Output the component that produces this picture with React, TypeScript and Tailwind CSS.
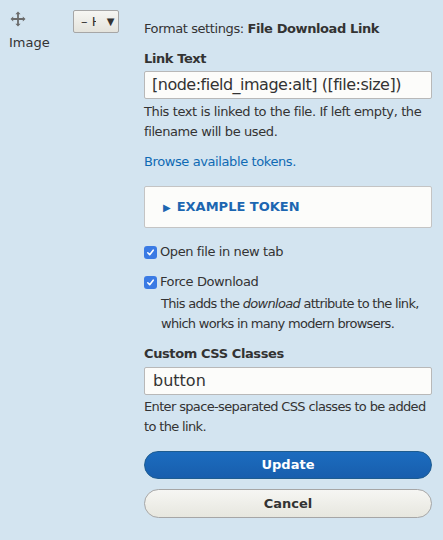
import React from 'react';

const MoveIcon = () => (
  <svg width="16" height="16" viewBox="0 0 16 16" className="text-[#6b6b6b]">
    <path
      fill="currentColor"
      d="M8 0.5 L10.6 3.2 H8.9 V7.1 H12.8 V5.4 L15.5 8 L12.8 10.6 V8.9 H8.9 V12.8 H10.6 L8 15.5 L5.4 12.8 H7.1 V8.9 H3.2 V10.6 L0.5 8 L3.2 5.4 V7.1 H7.1 V3.2 H5.4 Z"
    />
  </svg>
);

const Check = ({ label }: { label: string }) => (
  <label className="flex items-end leading-[20px]">
    <span className="mb-[3px] mr-[3px] flex h-[13px] w-[13px] shrink-0 items-center justify-center rounded-[3px] bg-[#3a7ae4]">
      <svg width="9" height="9" viewBox="0 0 9 9">
        <path d="M1.8 4.8 L3.7 6.7 L7.2 2.2" fill="none" stroke="white" strokeWidth="1.6" strokeLinecap="round" strokeLinejoin="round" />
      </svg>
    </span>
    <span>{label}</span>
  </label>
);

export default function App() {
  return (
    <div
      className="flex min-h-[540px] w-[443px] bg-[#d3e4f0] text-[13px] tracking-[-0.4px] text-[#333]"
      style={{ fontFamily: '"DejaVu Sans", "Liberation Sans", sans-serif' }}
    >
      {/* drag handle + label */}
      <div className="w-[73px] shrink-0 pl-[9px] pt-[11px]">
        <div className="pl-[1px]">
          <MoveIcon />
        </div>
        <div className="mt-[6px] leading-[20px] tracking-normal">Image</div>
      </div>

      {/* region select */}
      <div className="w-[71px] shrink-0 pt-[10px]">
        <div className="flex h-[23px] w-[46px] items-center rounded-[2px] border border-[#a6a6a6] bg-gradient-to-b from-[#f6f6f3] to-[#e4e3dc] pl-[7px] pr-[4px]">
          <span className="w-[15px] overflow-hidden whitespace-nowrap text-[13px] tracking-normal">– Hidden –</span>
          <span className="ml-auto text-[10px] text-[#333]">▼</span>
        </div>
      </div>

      {/* plugin settings */}
      <div className="w-[288px] shrink-0 pt-[19px]">
        <div className="leading-[20px]">
          Format settings: <span className="font-bold">File Download Link</span>
        </div>

        <div className="mt-[10px] font-bold leading-[20px]">Link Text</div>
        <div className="mt-[2px] flex h-[28px] items-center rounded-[2px] border border-[#b8b8b8] bg-[#fcfcfa] pl-[7px] text-[16px] tracking-[-0.5px]">
          [node:field_image:alt] ([file:size])
        </div>
        <p className="mt-[3px] leading-[20px]">
          This text is linked to the file. If left empty, the filename will be used.
        </p>

        <div className="mt-[10px] leading-[20px] text-[#0f6ab4]">Browse available tokens.</div>

        <div className="mt-[14px] flex h-[42px] items-center rounded-[2px] border border-[#c4c4c4] bg-[#fcfcfa] pl-[18px] font-bold tracking-[0px] text-[#1c66b1]">
          <span className="mr-[6px] text-[10px]">▶</span>
          EXAMPLE TOKEN
        </div>

        <div className="mt-[14px]">
          <Check label="Open file in new tab" />
        </div>
        <div className="mt-[10px]">
          <Check label="Force Download" />
        </div>
        <p className="mt-[2px] pl-[17px] leading-[20px] tracking-[-0.7px]">
          This adds the <em>download</em> attribute to the link, which works in many modern browsers.
        </p>

        <div className="mt-[10px] font-bold leading-[20px]">Custom CSS Classes</div>
        <div className="mt-[3px] flex h-[28px] items-center rounded-[2px] border border-[#b8b8b8] bg-[#fcfcfa] pl-[8px] text-[16px] tracking-normal">
          button
        </div>
        <p className="mt-[2px] leading-[20px] tracking-[-0.65px]">
          Enter space-separated CSS classes to be added to the link.
        </p>

        <button className="mt-[14px] flex h-[28px] w-full items-center justify-center rounded-full border border-[#1e5c90] bg-gradient-to-b from-[#1c6cbf] to-[#185ead] font-bold tracking-normal text-white">
          Update
        </button>
        <button className="mt-[10px] flex h-[29px] w-full items-center justify-center rounded-full border border-[#a6a6a6] bg-gradient-to-b from-[#f6f6f3] to-[#e7e7df] font-bold tracking-normal text-[#333]">
          Cancel
        </button>
      </div>
    </div>
  );
}
